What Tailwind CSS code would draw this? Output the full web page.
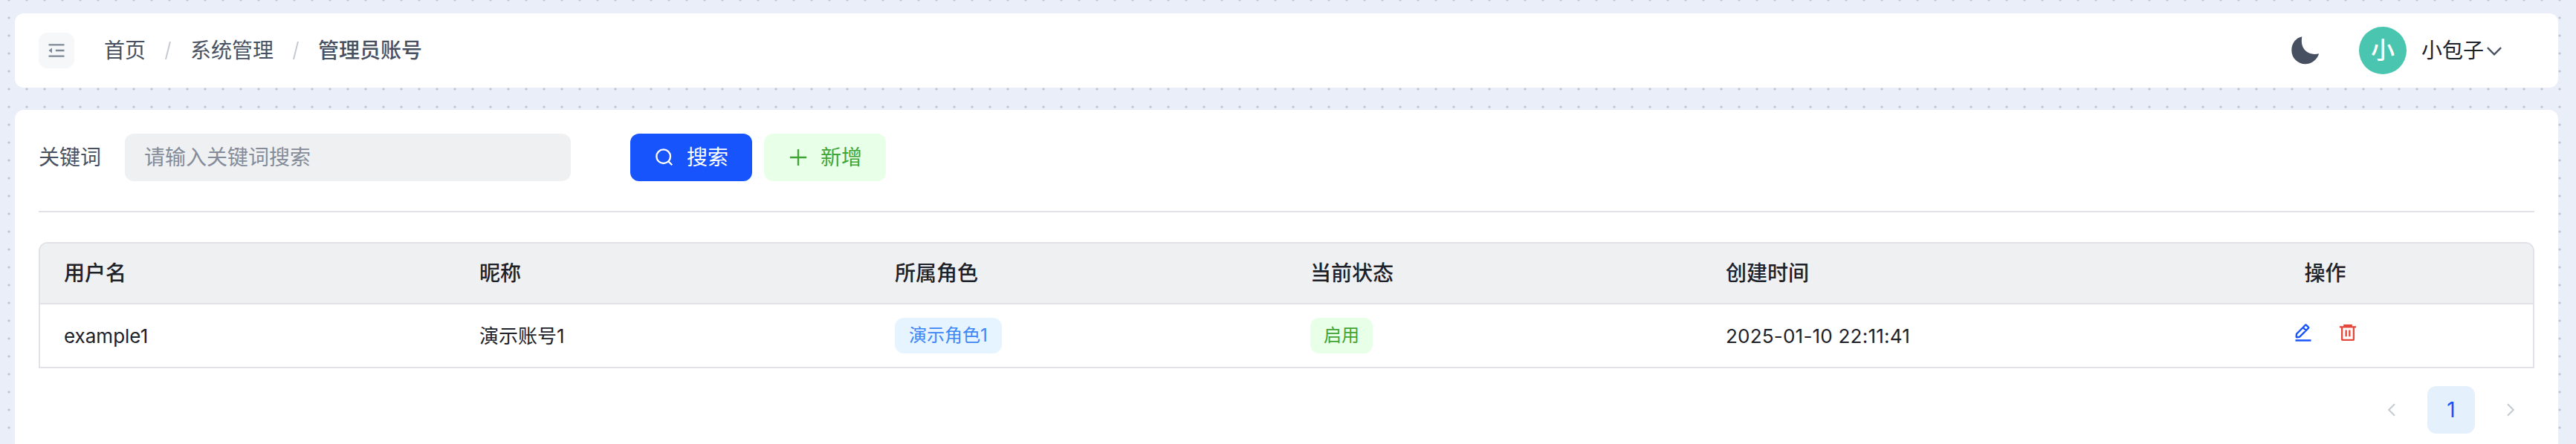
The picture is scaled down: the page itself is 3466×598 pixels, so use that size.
<!DOCTYPE html>
<html lang="zh-CN">
<head>
<meta charset="utf-8">
<title>管理员账号</title>
<script src="https://cdn.jsdelivr.net/npm/@tailwindcss/browser@4"></script>
</head>
<body class="h-[598px] overflow-hidden bg-[#e9eef8] bg-[radial-gradient(circle_at_center,#bfc6db_1.2px,transparent_2px)] bg-[length:24px_24px] bg-[position:0_-12px] pl-5 pr-6 pt-[18px] font-['Inter','Noto_Sans_CJK_SC',sans-serif] text-[28px] text-[#1d2129]">
<header class="flex h-[100px] items-center rounded-xl bg-white pl-8 pr-[72px] text-[#475060]">
  <button class="flex size-12 items-center justify-center rounded-xl bg-[#f6f7f9] text-[#7f8897]">
    <svg class="size-7" viewBox="0 0 48 48" fill="none" stroke="currentColor" stroke-width="4"><path d="M42 11H6M42 24H22M42 37H6"/><path d="M13.7 18.2v11.6L6 24z" fill="currentColor" stroke="none"/></svg>
  </button>
  <nav class="ml-10 flex items-center leading-10">
    <span>首页</span>
    <svg class="mx-[22px] h-6 w-4" viewBox="0 0 16 24" stroke="#c5c9d1" stroke-width="2"><path d="M5 24L11 0"/></svg>
    <span>系统管理</span>
    <svg class="mx-[22px] h-6 w-4" viewBox="0 0 16 24" stroke="#c5c9d1" stroke-width="2"><path d="M5 24L11 0"/></svg>
    <span class="font-medium">管理员账号</span>
  </nav>
  <div class="ml-auto flex items-center">
    <svg class="mr-[51px] size-11" viewBox="0 0 44 44" fill="#475060"><path d="M18.3 3.2C17 12 18.5 17.500 23 22.300C27.500 26.500 34 28 41.200 26.200C38.500 34.500 31.500 40.200 22.800 40.200C12.500 40.200 4.300 32 4.300 21.700C4.300 12.200 10 5 18.300 3.200Z"/></svg>
    <span class="flex size-16 items-center justify-center rounded-full bg-[#4ac6b0] text-[32px] font-medium text-white">小</span>
    <span class="ml-5 text-[#1d2129]">小包子</span>
    <svg class="size-7" viewBox="0 0 48 48" fill="none" stroke="currentColor" stroke-width="4"><path d="M39.600 17.400L24 33L8.400 17.400"/></svg>
  </div>
</header>
<main class="mt-[30px] h-[470px] rounded-t-xl bg-white px-8 pt-8">
  <div class="flex h-16 items-center">
    <label class="text-[#475060]">关键词</label>
    <div class="ml-8 flex h-16 w-[600px] items-center rounded-xl bg-[#eff0f2] pl-[26px] text-[#848c99]">请输入关键词搜索</div>
    <button class="ml-20 flex h-16 w-[164px] items-center rounded-xl bg-[#1754fb] pl-8 text-white">
      <svg class="mr-4 size-7" viewBox="0 0 48 48" fill="none" stroke="currentColor" stroke-width="4"><path d="M33.072 33.071c6.248-6.248 6.248-16.379 0-22.627-6.249-6.249-16.380-6.249-22.628 0-6.248 6.248-6.248 16.379 0 22.627 6.248 6.248 16.380 6.248 22.628 0Zm0 0 8.485 8.485"/></svg>搜索</button>
    <button class="ml-4 flex h-16 w-[164px] items-center rounded-xl bg-[#e8ffe8] pl-8 text-[#3fa535]">
      <svg class="mr-4 size-7" viewBox="0 0 48 48" fill="none" stroke="currentColor" stroke-width="4"><path d="M5 24h38M24 5v38"/></svg>新增</button>
  </div>
  <div class="mt-10 h-0.5 bg-[#e1e2e8]"></div>
  <div class="mt-10 h-[170px] overflow-hidden rounded-t-xl border-2 border-[#e1e2e8]">
    <div class="grid h-[82px] grid-cols-[557px_559px_559px_559px_559px_1fr] items-center border-b-2 border-[#e1e2e8] bg-[#eff0f2] font-medium">
      <div class="pl-8">用户名</div><div class="pl-[34px]">昵称</div><div class="pl-[34px]">所属角色</div><div class="pl-[34px]">当前状态</div><div class="pl-[34px]">创建时间</div><div class="pl-0.5 text-center">操作</div>
    </div>
    <div class="grid h-[84px] grid-cols-[557px_559px_559px_559px_559px_1fr] items-center text-[26px]">
      <div class="pl-8">example1</div>
      <div class="pl-[34px]">演示账号1</div>
      <div class="flex pl-[34px]"><span class="flex h-12 w-36 items-center justify-center rounded-xl bg-[#e6f4ff] text-2xl text-[#3c86f6]">演示角色1</span></div>
      <div class="flex pl-[34px]"><span class="flex h-12 w-[84px] items-center justify-center rounded-xl bg-[#e8ffe8] text-2xl text-[#3fa535]">启用</span></div>
      <div class="pl-[34px] tracking-[0.22px]">2025-01-10 22:11:41</div>
      <div class="flex justify-center gap-8 pb-2 pl-0.5">
        <svg class="size-7" viewBox="0 0 48 48" fill="none" stroke="#1754fb" stroke-width="4"><path d="m30.480 19.038 5.733-5.734a1 1 0 0 0 0-1.414l-5.586-5.586a1 1 0 0 0-1.414 0l-5.734 5.734m7 7L15.763 33.754a1 1 0 0 1-.59.286l-6.048.708a1 1 0 0 1-1.113-1.069l.477-6.310a1 1 0 0 1 .29-.631l14.700-14.700m7 7-7-7M6 42h36"/></svg>
        <svg class="size-7" viewBox="0 0 48 48" fill="none" stroke="#e5473a" stroke-width="4"><path d="M5 11h5.500m0 0v29a1 1 0 0 0 1 1h25a1 1 0 0 0 1-1V11m-27 0H16m21.500 0H43m-5.500 0H32m-16 0V7h16v4m-16 0h16M20 18v15M28 18v15"/></svg>
      </div>
    </div>
  </div>
  <div class="mt-6 flex justify-end gap-4 text-[#c5c9d1]">
    <span class="flex size-16 items-center justify-center"><svg class="size-6" viewBox="0 0 48 48" fill="none" stroke="currentColor" stroke-width="4"><path d="M32 8.400L16.444 23.956L32 39.513"/></svg></span>
    <span class="flex size-16 items-center justify-center rounded-xl bg-[#e5f0fd] text-[#1754fb]">1</span>
    <span class="flex size-16 items-center justify-center"><svg class="size-6" viewBox="0 0 48 48" fill="none" stroke="currentColor" stroke-width="4"><path d="M16 39.513L31.556 23.957L16 8.400"/></svg></span>
  </div>
</main>
</body>
</html>
